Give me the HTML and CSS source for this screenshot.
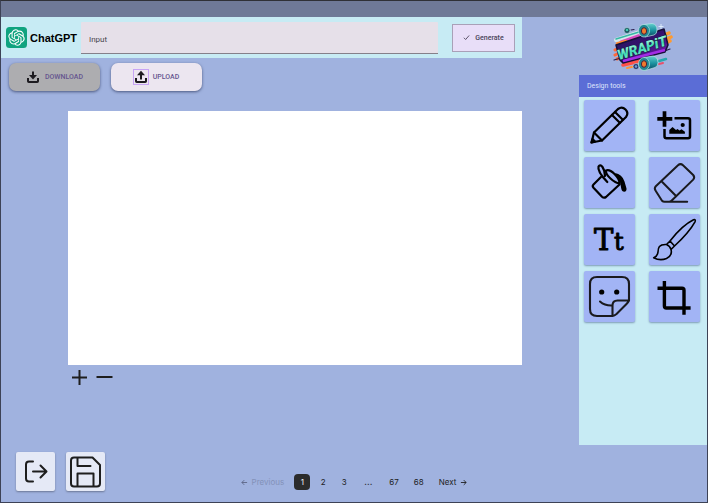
FILE: index.html
```html
<!DOCTYPE html>
<html lang="en">
<head>
<meta charset="utf-8">
<meta name="viewport" content="width=device-width, initial-scale=1">
<title>WrapIt designer</title>
<link rel="stylesheet" href="styles.css">
</head>
<body>
<div class="app">
  <div class="topbar"></div>
  <div class="workspace">
    <main class="editor">
      <form class="prompt">
        <div class="brand">
          <svg class="brand-mark" viewBox="0 0 36 36" aria-hidden="true">
            <rect width="36" height="36" rx="6" fill="#10a37f"/>
            <path transform="translate(4 4) scale(1.17)" fill="#fff" d="M22.2819 9.8211a5.9847 5.9847 0 0 0-.5157-4.9108 6.0462 6.0462 0 0 0-6.5098-2.9A6.0651 6.0651 0 0 0 4.9807 4.1818a5.9847 5.9847 0 0 0-3.9977 2.9 6.0462 6.0462 0 0 0 .7427 7.0966 5.98 5.98 0 0 0 .511 4.9107 6.051 6.051 0 0 0 6.5146 2.9001A5.9847 5.9847 0 0 0 13.2599 24a6.0557 6.0557 0 0 0 5.7718-4.2058 5.9894 5.9894 0 0 0 3.9977-2.9001 6.0557 6.0557 0 0 0-.7475-7.0729zm-9.022 12.6081a4.4755 4.4755 0 0 1-2.8764-1.0408l.1419-.0804 4.7783-2.7582a.7948.7948 0 0 0 .3927-.6813v-6.7369l2.02 1.1686a.071.071 0 0 1 .038.052v5.5826a4.504 4.504 0 0 1-4.4945 4.4944zm-9.6607-4.1254a4.4708 4.4708 0 0 1-.5346-3.0137l.142.0852 4.783 2.7582a.7712.7712 0 0 0 .7806 0l5.8428-3.3685v2.3324a.0804.0804 0 0 1-.0332.0615L9.74 19.9502a4.4992 4.4992 0 0 1-6.1408-1.6464zM2.3408 7.8956a4.485 4.485 0 0 1 2.3655-1.9728V11.6a.7664.7664 0 0 0 .3879.6765l5.8144 3.3543-2.0201 1.1685a.0757.0757 0 0 1-.071 0l-4.8303-2.7865A4.504 4.504 0 0 1 2.3408 7.872zm16.5963 3.8558L13.1038 8.364 15.1192 7.2a.0757.0757 0 0 1 .071 0l4.8303 2.7913a4.4944 4.4944 0 0 1-.6765 8.1042v-5.6772a.79.79 0 0 0-.407-.667zm2.0107-3.0231l-.142-.0852-4.7735-2.7818a.7759.7759 0 0 0-.7854 0L9.409 9.2297V6.8974a.0662.0662 0 0 1 .0284-.0615l4.8303-2.7866a4.4992 4.4992 0 0 1 6.6802 4.66zM8.3065 12.863l-2.02-1.1638a.0804.0804 0 0 1-.038-.0567V6.0742a4.4992 4.4992 0 0 1 7.3757-3.4537l-.142.0805L8.704 5.459a.7948.7948 0 0 0-.3927.6813zm1.0976-2.3654l2.602-1.4998 2.6069 1.4998v2.9994l-2.5974 1.4997-2.6067-1.4997Z"/>
          </svg>
          <span class="brand-name">ChatGPT</span>
        </div>
        <input class="prompt-input" type="text" placeholder="Input" aria-label="Input">
        <button class="generate" type="button">
          <svg class="check" viewBox="0 0 8 8" aria-hidden="true"><path d="M1 4.3 3 6.3 7 1.7"/></svg>
          Generate
        </button>
      </form>

      <div class="transfer">
        <button class="pill pill-muted" type="button">
          <svg class="pill-icon" viewBox="0 0 14 14" aria-hidden="true"><path d="M2 8v3.2q0 .8.8.8h8.4q.8 0 .8-.8V8M7 1.5v5"/><path class="solid" d="M3 5h8L7 9.6z"/></svg>
          DOWNLOAD
        </button>
        <button class="pill" type="button">
          <svg class="pill-icon pill-icon-framed" viewBox="0 0 14 14" aria-hidden="true"><path d="M2 8v3.2q0 .8.8.8h8.4q.8 0 .8-.8V8M7 9.5V4"/><path class="solid" d="M3 5.2h8L7 .8z"/></svg>
          UPLOAD
        </button>
      </div>

      <section class="stage">
        <div class="canvas"></div>
        <div class="zoom">
          <button class="zoom-button" type="button" aria-label="Zoom in"><svg viewBox="0 0 17 17"><path d="M8.5 1v15M1 8.5h15"/></svg></button>
          <button class="zoom-button" type="button" aria-label="Zoom out"><svg viewBox="0 0 17 17"><path d="M.5 8h16"/></svg></button>
        </div>
      </section>
    </main>

    <aside class="side">
      <svg class="logo" viewBox="0 0 60 50" role="img" aria-label="WRAPiT">
        <defs>
          <linearGradient id="letters" x1="0" y1="0" x2="0" y2="1"><stop offset="0" stop-color="#c9ffe9"/><stop offset=".55" stop-color="#3fd9b4"/><stop offset="1" stop-color="#8df0d0"/></linearGradient>
          <linearGradient id="plate" x1="0" y1="0" x2="1" y2="1"><stop offset="0" stop-color="#241a58"/><stop offset=".5" stop-color="#35106f"/><stop offset="1" stop-color="#8a1fc4"/></linearGradient>
          <linearGradient id="roll" x1="0" y1="0" x2="0" y2="1"><stop offset="0" stop-color="#62cfcc"/><stop offset=".5" stop-color="#1d93a0"/><stop offset="1" stop-color="#0d4660"/></linearGradient>
        </defs>
        <g stroke-linecap="round" fill="none">
          <path d="M3 17 27 9M5 21 27 13" stroke="#d5e6ea" stroke-width="4"/>
          <path d="M3 16 26 9" stroke="#35b9a6" stroke-width="1.5"/>
          <path d="M8 19 28 12" stroke="#d64bc0" stroke-width="3"/>
          <path d="M4 20.5 13 18" stroke="#ff8a2c" stroke-width="2.5"/>
          <path d="M2 27 7 25M2 32 8 29M4 36 9 34" stroke="#ff6a38" stroke-width="3"/>
          <path d="M51 12 56 10M53 16 58 14M53 20 57 18" stroke="#ff9a2e" stroke-width="3.5"/>
          <path d="M10 42 27 38" stroke="#ff5147" stroke-width="3.5"/>
          <path d="M14 45 25 42.5" stroke="#ff9238" stroke-width="2"/>
          <path d="M46 38 53 36" stroke="#25a8ad" stroke-width="2.5"/>
          <path d="M46 41 50 40" stroke="#e8516b" stroke-width="2"/>
          <path d="M18 7 21 6.5M1 37 8 35M49 29 57 26" stroke="#271c4c" stroke-width="1.2"/>
        </g>
        <circle cx="14" cy="7.5" r="3" fill="#1c5260" stroke="#c4e5eb" stroke-width=".6"/><circle cx="14" cy="7" r="1.3" fill="#42c9ad"/>
        <circle cx="23" cy="43.5" r="3" fill="#2b316c" stroke="#c4e5eb" stroke-width=".6"/><circle cx="23" cy="43.5" r="1.3" fill="#6ca3d5"/>
        <path d="M48 1v5M45.5 3.5h5" stroke="#e9f6ff" stroke-width=".8"/>
        <path d="M3 22 51 6 55 22 52 29 10 40 7 37z" fill="url(#plate)" stroke="#171038" stroke-width="1.5" stroke-linejoin="round"/>
        <path d="M10 38 52 27" stroke="#a32be5" stroke-width="2.5"/>
        <g stroke="#b7e4e5" stroke-width=".7">
          <path d="M31 1.5 39 .5q5 .5 5 6.5 0 4-3 5L32 14z" fill="url(#roll)"/>
          <ellipse cx="31" cy="7.7" rx="5.500" ry="6.3" fill="#1f8791"/>
          <path d="M31 34.5 40 33q5 1 5 6.5 0 4-3 5L32 47.5z" fill="url(#roll)"/>
          <ellipse cx="31" cy="41" rx="5.5" ry="6.5" fill="#1f8791"/>
        </g>
        <ellipse cx="31" cy="8" rx="2.6" ry="3.3" fill="#ef7a2c" stroke="#4b2238"/>
        <ellipse cx="31" cy="41" rx="2.6" ry="3.3" fill="#ef7a2c" stroke="#4b2238"/>
        <text class="logo-text" x="6" y="37" transform="rotate(-17 6 37)">WRAPiT</text>
      </svg>

      <section class="tools">
        <h2 class="tools-title">Design tools</h2>
        <div class="tool-grid">
          <button class="tool" type="button" aria-label="Pencil">
            <svg viewBox="0 0 51 51"><g stroke-width="2.2"><path d="M7.5 42.5 10 32.5 34 9q4-3 7.5.5t.5 7.5L18 40.5z"/><path d="M10 32.5 18 40.5M28 15l7.8 7.8M31 12l7.8 7.8"/><path fill="#000" d="M7.5 42.5 8.5 39 11 41.5z"/></g></svg>
          </button>
          <button class="tool" type="button" aria-label="Add image">
            <svg viewBox="0 0 51 51"><path stroke-width="3.7" stroke-linecap="butt" d="M15.5 11.3v15.4M8.3 18.8h15"/><path stroke-width="2.5" stroke-linecap="butt" d="M25.5 18.3H39q2 0 2 2v16q0 2-2 2H17.5q-2 0-2-2V29"/><circle class="solid" cx="33.7" cy="25" r="2.1"/><path class="solid" d="M20.3 33.8v-3.8l3.2-3 3.5 3 1.5-1 2 1.5 2-1.2 3.4 2.5v2z"/></svg>
          </button>
          <button class="tool" type="button" aria-label="Fill">
            <svg viewBox="0 0 51 51"><g stroke-width="2.2"><path d="M17 20 9.5 27.5q-1.5 1.5 0 3.2l8.500 9q2 1.8 4 .3L35.5 27.5"/><path d="M23.3 25C18 19.5 13.5 13 14.5 9.5q1.5-2.5 4 .5 2.5 3.5 2.5 9"/><path d="M22 13.5q3.5-1.5 8.5 3.5 5.5 5.5 5 9.5-4-.5-9-5t-4.5-8z"/></g><path class="solid" d="M31 16q7 1 9.5 8.500l2 7q.3 3-2.2 3.3-2.500 0-3-3L36 25z"/></svg>
          </button>
          <button class="tool" type="button" aria-label="Eraser">
            <svg viewBox="0 0 51 51" class="ink-soft"><path stroke-width="2" d="M29 8.2Q31.5 6 34 8.2L44.2 18q2 2.3 0 4.6L22.5 43.7q-1 1-2.5 1h-4.5q-1.5 0-2.5-1L6.800 34q-2-2.5 0-4.8zM12.5 24.2l14.8 15M15 44.7h23.2"/></svg>
          </button>
          <button class="tool" type="button" aria-label="Text">
            <svg viewBox="0 0 51 51"><text class="glyph glyph-big" x="10" y="36">T</text><text class="glyph glyph-small" x="30" y="36">t</text></svg>
          </button>
          <button class="tool" type="button" aria-label="Brush">
            <svg viewBox="0 0 51 51"><path stroke-width="1.6" d="M21 27C28 18 38 9 44.5 5.8q2.5-.8 1.5 2C42 15 33.5 24.5 25.5 32M21 27l4.5 5M21 27l-3.5 3.5q3.5 1.5 4.5 5l3.5-3.5M17.5 30.5C10 30 9 34 9 38q-.5 4.5-4.3 5.7 6.3 3.5 12.8.8c4-2 5.5-5.5 4.500-9"/></svg>
          </button>
          <button class="tool" type="button" aria-label="Sticker">
            <svg viewBox="0 0 51 51" class="ink-soft"><path stroke-width="2.1" d="M28.5 45H13q-7 0-7-7V13q0-7 7-7h25q7 0 7 7v16.5q-1 2-2.5 3.5L32.5 43q-2 1.7-4 2zM28.5 45V34.5q0-5 5-5H45M16 30.5q5 4.5 12.5 4"/><circle class="solid" cx="17.7" cy="21" r="2.6"/><circle class="solid" cx="32.7" cy="21" r="2.6"/></svg>
          </button>
          <button class="tool" type="button" aria-label="Crop">
            <svg viewBox="0 0 51 51"><path stroke-width="3.4" stroke-linecap="butt" d="M15.4 10V35q0 2 2 2h24.2M8.5 17.2h24.5q2 0 2 2v24.5"/></svg>
          </button>
        </div>
      </section>
    </aside>
  </div>

  <footer class="footer">
    <div class="actions">
      <button class="action" type="button" aria-label="Exit"><svg viewBox="0 0 39 39"><path d="M17 9.5h-4q-3 0-3 3v14q0 3 3 3h4M17 19.5h13M24.5 13.5l6 6-6 6"/></svg></button>
      <button class="action" type="button" aria-label="Save"><svg viewBox="0 0 39 39"><path d="M8 5.5h18.5L34 13v18.5q0 3-3 3H8q-3 0-3-3v-23q0-3 3-3zM11.5 5.5V14h13M11.5 34.5V21.5h16v13"/></svg></button>
    </div>
    <nav class="pager" aria-label="Pagination">
      <button class="page-step" type="button" disabled><svg viewBox="0 0 8 8"><path d="M7 4H1M3.7 1.3 1 4l2.7 2.7"/></svg>Previous</button>
      <ul class="pages">
        <li><a class="page page-current" href="#" aria-current="page">1</a></li>
        <li><a class="page" href="#">2</a></li>
        <li><a class="page" href="#">3</a></li>
        <li class="page page-gap">...</li>
        <li><a class="page" href="#">67</a></li>
        <li><a class="page" href="#">68</a></li>
      </ul>
      <button class="page-step" type="button">Next<svg viewBox="0 0 8 8"><path d="M1 4h6M4.3 1.3 7 4 4.3 6.7"/></svg></button>
    </nav>
  </footer>
</div>
</body>
</html>
```
FILE: styles.css
```css
* { box-sizing: border-box; }

body {
  margin: 0;
  font-family: Roboto, "Liberation Sans", sans-serif;
  font-size: 8px;
  color: #1e1e1e;
}

button {
  font: inherit;
  color: inherit;
  border: 0;
  padding: 0;
  background: none;
}

svg { display: block; }

.app {
  display: flex;
  flex-direction: column;
  min-height: 100vh;
  border: 1px solid #3d4256;
  border-top-color: #2f3036;
  background: #a0b2df;
}

.topbar {
  height: 16px;
  background: #6f7997;
}

.workspace {
  display: flex;
  flex: 1;
  gap: 57px;
}

.editor {
  display: flex;
  flex-direction: column;
  flex: 1;
  min-width: 0;
}

/* Prompt bar */
.prompt {
  display: flex;
  align-items: center;
  gap: 14px;
  height: 41px;
  padding: 0 7px 0 5px;
  background: #c7ebf4;
}

.brand {
  display: flex;
  align-items: center;
  gap: 3px;
  flex: none;
  width: 61px;
}

.brand-mark {
  width: 21px;
  height: 21px;
  flex: none;
}

.brand-name {
  font: 700 11px/16px "Liberation Sans", sans-serif;
  color: #000;
}

.prompt-input {
  flex: 1;
  min-width: 0;
  height: 32px;
  padding: 4px 8px 0;
  border: 0;
  border-bottom: 1px solid #85808a;
  border-radius: 1px 1px 0 0;
  background: #e6e0e9;
  font: inherit;
}

.prompt-input::placeholder {
  color: #49454f;
  opacity: 1;
}

.generate {
  display: flex;
  align-items: center;
  justify-content: center;
  gap: 5px;
  width: 63px;
  height: 28px;
  border: 1px solid #a9a0b8;
  background: #e8def8;
  color: #4a4458;
  font-size: 7px;
  font-weight: 500;
}

.check {
  width: 7px;
  height: 7px;
  fill: none;
  stroke: #4a4458;
}

/* Transfer buttons */
.transfer {
  display: flex;
  gap: 11px;
  padding: 5px 8px 0;
}

.pill {
  display: flex;
  align-items: center;
  justify-content: center;
  gap: 5px;
  width: 91px;
  height: 28px;
  border-radius: 7px;
  background: #ece6f0;
  box-shadow: 0 1px 3px #4a577f;
  color: #65558f;
  font-size: 7px;
  font-weight: 500;
}

.pill-muted { background: #adadb0; }

.pill-icon {
  width: 14px;
  height: 14px;
  fill: none;
  stroke: #1d1b20;
  stroke-width: 2;
}

.pill-icon-framed { outline: 1px solid #c7a4f5; }

.pill-icon .solid {
  fill: #1d1b20;
  stroke: none;
}

/* Canvas */
.stage {
  display: flex;
  flex-direction: column;
  flex: 1;
  padding: 20px 0 0 67px;
}

.canvas {
  flex: 1;
  min-height: 160px;
  background: #fff;
}

.zoom {
  display: flex;
  gap: 8px;
  padding: 4px 3px 0;
  height: 80px;
}

.zoom-button {
  width: 17px;
  height: 17px;
}

.zoom-button svg {
  fill: none;
  stroke: #1e1e1e;
  stroke-width: 2;
}

/* Tools */
.side {
  display: flex;
  flex-direction: column;
  width: 128px;
}

.logo {
  width: 60px;
  height: 50px;
  margin: 6px auto 2px;
}

.logo-text {
  font: italic 900 14px Roboto, "Liberation Sans", sans-serif;
  fill: url(#letters);
  stroke: #10263f;
  stroke-width: 1px;
  paint-order: stroke;
}

.tools {
  flex: 1;
  background: #c7ebf4;
}

.tools-title {
  margin: 0;
  padding: 0 8px;
  background: #5b6dd6;
  color: #dfe4fb;
  font-size: 7px;
  font-weight: 400;
  line-height: 22px;
}

.tool-grid {
  display: grid;
  grid-template-columns: 51px 51px;
  justify-content: space-between;
  gap: 6px;
  padding: 3px 7px 3px 5px;
}

.tool {
  height: 51px;
  border-radius: 2px;
  background: #a2b4f5;
  box-shadow: 0 1px 2px #7d9bb5;
}

.tool svg {
  width: 51px;
  height: 51px;
  fill: none;
  stroke: #000;
  stroke-linecap: round;
  stroke-linejoin: round;
}

.tool .ink-soft { stroke: #1a1a1e; }

.tool .solid {
  fill: #000;
  stroke: none;
}

.glyph {
  font-family: "DejaVu Serif", serif;
  fill: #000;
  stroke-width: 1px;
}

.glyph-big { font-size: 29px; }
.glyph-small { font-size: 24px; }

/* Footer */
.footer {
  display: grid;
  grid-template-columns: 1fr auto 1fr;
  align-items: center;
  padding: 7px 15px 11px;
}

.actions {
  display: flex;
  gap: 11px;
}

.action {
  width: 39px;
  height: 39px;
  border-radius: 2px;
  background: #e5e9f6;
  box-shadow: 0 1px 2px #6b7795;
}

.action svg {
  fill: none;
  stroke: #1e1e1e;
  stroke-width: 2;
  stroke-linecap: round;
  stroke-linejoin: round;
}

.pager {
  display: flex;
  align-items: center;
  gap: 10px;
  padding-top: 21px;
  font-family: Inter, "Liberation Sans", sans-serif;
}

.page-step {
  display: flex;
  align-items: center;
  gap: 4px;
}

.page-step:disabled { color: #8391b8; }

.page-step svg {
  width: 7px;
  height: 7px;
  fill: none;
  stroke: currentColor;
}

.page-step:disabled svg { stroke: #5b6585; }

.pages {
  display: flex;
  gap: 5px;
  margin: 0;
  padding: 0;
  list-style: none;
}

.page {
  display: block;
  min-width: 16px;
  padding: 0 5px;
  border-radius: 4px;
  color: inherit;
  line-height: 16px;
  text-align: center;
  text-decoration: none;
}

.page-gap {
  padding: 0 7px;
  font-weight: 700;
}

.page-current {
  background: #2c2c2c;
  color: #f5f5f5;
}
```
